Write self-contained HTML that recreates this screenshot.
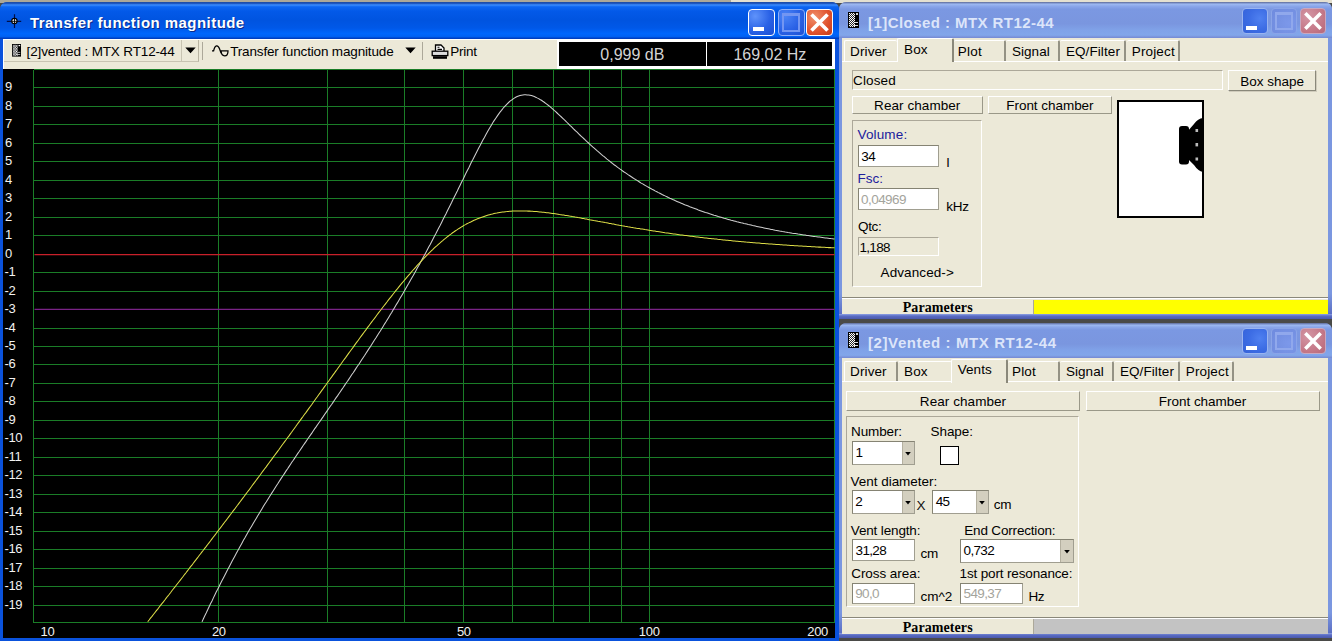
<!DOCTYPE html><html><head><meta charset="utf-8"><title>Transfer function magnitude</title>
<style>
html,body{margin:0;padding:0}
body{width:1332px;height:641px;overflow:hidden;position:relative;background:#4a4a48;font-family:'Liberation Sans', Arial, sans-serif}
div,span,svg{position:absolute;box-sizing:border-box}
.sunk{border:1px solid;border-color:#aca899 #fff #fff #aca899}
.inp{border:1px solid;border-color:#7f9db9;background:#fff}
.inp2{border:1px solid;border-color:#848274 #d8d4c4 #d8d4c4 #848274;background:#fff}
.btn{border:1px solid;border-color:#fff #aca899 #aca899 #fff;background:#ece9d8}
</style></head><body>
<div style="left:0px;top:0px;width:731px;height:3px;background:#aca899"></div>
<div style="left:731px;top:0px;width:601px;height:3px;background:#e4e0d0"></div>
<div style="left:0px;top:2px;width:839px;height:639px;background:#0a52dc;border-radius:8px 8px 0 0"></div>
<div style="left:0px;top:2px;width:839px;height:37px;background:linear-gradient(#1c4aa0 0,#1d56c0 4%,#3c8eff 8%,#0d66f2 13%,#0359e8 25%,#0054e0 50%,#0058e8 70%,#0066fc 85%,#0062f4 93%,#0044cc 97.5%,#0038b0 100%);border-radius:7px 7px 0 0"></div>
<svg style="left:6px;top:13px" width="17" height="17" viewBox="0 0 17 17"><path d="M8.5 1.2 V15 M0.8 8.3 H15.2" stroke="#00104a" stroke-width="1.2"/><circle cx="8.4" cy="8.1" r="2.7" fill="#fff" stroke="#000" stroke-width="1.1"/><path d="M8.5 5.5 V10.8 M5.8 8.3 H11" stroke="#000" stroke-width="0.9"/></svg>
<span style="left:30px;top:14px;font:bold 15px/17px 'Liberation Sans', Arial, sans-serif;color:#fff;white-space:pre;letter-spacing:0.45px;text-shadow:1px 1px 0 #0a2a8a;;">Transfer function magnitude</span>
<div style="left:748px;top:9px;width:27px;height:27px;border:1px solid #fff;border-radius:4px;background:radial-gradient(circle at 25% 25%,#5f93fb,#2a62e6 55%,#1c4fd2)">
<div style="left:4.0px;top:17.3px;width:11.3px;height:4.0px;background:#fff"></div>
</div>
<div style="left:777.5px;top:9px;width:27px;height:27px;border:1px solid #8fb0f8;border-radius:4px;background:radial-gradient(circle at 25% 25%,#4c84f6,#2a62e6 55%,#1c4fd2)">
<div style="left:3.5px;top:3.2px;width:18.4px;height:18.4px;border:2px solid #7396f2;border-top-width:3px"></div>
</div>
<div style="left:806px;top:9px;width:27px;height:27px;border:1px solid #fff;border-radius:4px;background:radial-gradient(circle at 30% 30%,#f0906c,#e0512c 60%,#c43a18)">
<svg style="left:0;top:0" width="25" height="25" viewBox="0 0 24 24"><path d="M4.3 4.3 L19.7 19.7 M19.7 4.3 L4.3 19.7" stroke="#fff" stroke-width="3.5" stroke-linecap="butt"/></svg>
</div>
<div style="left:3px;top:39px;width:832px;height:30px;background:#ece9d8;border-top:1px solid #fff;border-left:1px solid #fff"></div>
<div style="left:4px;top:40px;width:195px;height:22px;border-right:1px solid #b8b4a2;border-bottom:1px solid #c8c4b2"></div>
<div style="left:181px;top:40px;width:1px;height:21px;background:#c8c4b2"></div>
<svg style="left:12px;top:44.4px" width="9" height="12.6" viewBox="0 0 11 16" preserveAspectRatio="none"><defs><pattern id="ck1" width="2" height="2" patternUnits="userSpaceOnUse"><rect width="2" height="2" fill="#2a2a2a"/><rect width="1" height="1" fill="#fff"/><rect x="1" y="1" width="1" height="1" fill="#fff"/></pattern></defs><rect width="11" height="16" fill="#000"/><rect x="1" y="1" width="6" height="14" fill="url(#ck1)"/><rect x="8" y="1.2" width="2" height="1.6" fill="#fff"/><rect x="7" y="10" width="3" height="1" fill="#ddd"/><rect x="5" y="13" width="5" height="1" fill="#ddd"/></svg>
<span style="left:26.6px;top:44px;font:normal 13.5px/15px 'Liberation Sans', Arial, sans-serif;color:#000;white-space:pre;;letter-spacing:-0.145px;">[2]vented : MTX RT12-44</span>
<svg style="left:185px;top:47px" width="11" height="7" viewBox="0 0 11 7"><path d="M0.3 0.5 H10.7 L5.5 6.3 Z" fill="#000"/></svg>
<div style="left:202px;top:42px;width:1px;height:18px;background:#aca899"></div>
<svg style="left:211px;top:44px" width="19" height="14" viewBox="0 0 19 14"><path d="M1 6.8 H2.6 C4 0.5,7 0.5,8.6 5 C9.2 7,9.8 8.5,10.6 9.6" fill="none" stroke="#000" stroke-width="1.25"/><path d="M10 6.9 H17 C17 13.4,10.4 13.4,10 6.9 Z" fill="none" stroke="#000" stroke-width="1.25"/></svg>
<span style="left:230.2px;top:44px;font:normal 13.5px/15px 'Liberation Sans', Arial, sans-serif;color:#000;white-space:pre;;letter-spacing:-0.159px;">Transfer function magnitude</span>
<svg style="left:405px;top:47px" width="11" height="7" viewBox="0 0 11 7"><path d="M0.3 0.5 H10.7 L5.5 6.3 Z" fill="#000"/></svg>
<div style="left:422px;top:42px;width:1px;height:18px;background:#aca899"></div>
<svg style="left:431px;top:43.6px" width="18" height="16" viewBox="0 0 18 16"><path d="M4.5 7 V1 H10 L13 4 V7" fill="#fff" stroke="#000" stroke-width="1.3"/><path d="M6.5 3.2 H8.5 M6.5 5.4 H11" stroke="#000" stroke-width="1.1"/><rect x="1.2" y="7.2" width="15.6" height="4.4" fill="#ddd" stroke="#000" stroke-width="1.3"/><rect x="2" y="12.2" width="14" height="2.6" fill="#000"/></svg>
<span style="left:450.2px;top:44px;font:normal 13.5px/15px 'Liberation Sans', Arial, sans-serif;color:#000;white-space:pre;;letter-spacing:-0.233px;">Print</span>
<div style="left:557px;top:40px;width:278px;height:29px;background:#fff"></div>
<div style="left:559px;top:42px;width:146.7px;height:23.7px;background:#000"></div>
<div style="left:707.3px;top:42px;width:125.2px;height:23.7px;background:#000"></div>
<span style="left:559px;top:46px;font:normal 16px/17px 'Liberation Sans', Arial, sans-serif;color:#d4d4d4;white-space:pre;;width:146.7px;text-align:center;">0,999 dB</span>
<span style="left:707.3px;top:46px;font:normal 16px/17px 'Liberation Sans', Arial, sans-serif;color:#d4d4d4;white-space:pre;;width:125.2px;text-align:center;">169,02 Hz</span>
<div style="left:3px;top:68.6px;width:832px;height:569.6999999999999px;background:#000"></div>
<svg style="left:0;top:0" width="840" height="641" viewBox="0 0 840 641"><g shape-rendering="crispEdges" stroke-width="1" fill="none"><path d="M33.5 605.5 H834.5" stroke="#1a7d27"/><path d="M33.5 586.5 H834.5" stroke="#1a7d27"/><path d="M33.5 568.5 H834.5" stroke="#1a7d27"/><path d="M33.5 549.5 H834.5" stroke="#1a7d27"/><path d="M33.5 531.5 H834.5" stroke="#1a7d27"/><path d="M33.5 512.5 H834.5" stroke="#1a7d27"/><path d="M33.5 494.5 H834.5" stroke="#1a7d27"/><path d="M33.5 475.5 H834.5" stroke="#1a7d27"/><path d="M33.5 457.5 H834.5" stroke="#1a7d27"/><path d="M33.5 438.5 H834.5" stroke="#1a7d27"/><path d="M33.5 420.5 H834.5" stroke="#1a7d27"/><path d="M33.5 401.5 H834.5" stroke="#1a7d27"/><path d="M33.5 383.5 H834.5" stroke="#1a7d27"/><path d="M33.5 364.5 H834.5" stroke="#1a7d27"/><path d="M33.5 346.5 H834.5" stroke="#1a7d27"/><path d="M33.5 328.5 H834.5" stroke="#1a7d27"/><path d="M33.5 291.5 H834.5" stroke="#1a7d27"/><path d="M33.5 272.5 H834.5" stroke="#1a7d27"/><path d="M33.5 235.5 H834.5" stroke="#1a7d27"/><path d="M33.5 217.5 H834.5" stroke="#1a7d27"/><path d="M33.5 198.5 H834.5" stroke="#1a7d27"/><path d="M33.5 180.5 H834.5" stroke="#1a7d27"/><path d="M33.5 161.5 H834.5" stroke="#1a7d27"/><path d="M33.5 143.5 H834.5" stroke="#1a7d27"/><path d="M33.5 124.5 H834.5" stroke="#1a7d27"/><path d="M33.5 106.5 H834.5" stroke="#1a7d27"/><path d="M33.5 87.5 H834.5" stroke="#1a7d27"/><path d="M33.5 69.5 H834.5 M33.5 622.5 H834.5" stroke="#1a7d27"/><path d="M33.5 69.5 V622.5" stroke="#1a7d27"/><path d="M218.5 69.5 V622.5" stroke="#1a7d27"/><path d="M327.5 69.5 V622.5" stroke="#1a7d27"/><path d="M404.5 69.5 V622.5" stroke="#1a7d27"/><path d="M463.5 69.5 V622.5" stroke="#1a7d27"/><path d="M512.5 69.5 V622.5" stroke="#1a7d27"/><path d="M553.5 69.5 V622.5" stroke="#1a7d27"/><path d="M589.5 69.5 V622.5" stroke="#1a7d27"/><path d="M621.5 69.5 V622.5" stroke="#1a7d27"/><path d="M649.5 69.5 V622.5" stroke="#1a7d27"/><path d="M834.5 69.5 V622.5" stroke="#1a7d27"/></g><path d="M34.5 254.6 H834.5" stroke="#c8202a" stroke-width="1.4"/><path d="M34.5 309.4 H834.5" stroke="#7a2386" stroke-width="1.3"/><polyline points="202.0,621.9 203.4,618.8 204.8,615.8 206.3,612.8 207.7,609.8 209.1,606.8 210.5,603.8 212.0,600.9 213.4,597.9 214.8,595.0 216.2,592.1 217.7,589.3 219.1,586.4 220.5,583.6 221.9,580.7 223.4,577.9 224.8,575.2 226.2,572.4 227.7,569.6 229.1,566.9 230.5,564.2 231.9,561.5 233.4,558.8 234.8,556.2 236.2,553.6 237.6,550.9 239.1,548.3 240.5,545.8 241.9,543.2 243.3,540.6 244.8,538.1 246.2,535.6 247.6,533.1 249.0,530.6 250.5,528.1 251.9,525.7 253.3,523.3 254.8,520.8 256.2,518.4 257.6,516.0 259.0,513.7 260.5,511.3 261.9,509.0 263.3,506.6 264.7,504.3 266.2,502.0 267.6,499.7 269.0,497.4 270.4,495.2 271.9,492.9 273.3,490.7 274.7,488.4 276.1,486.2 277.6,484.0 279.0,481.8 280.4,479.6 281.8,477.4 283.3,475.2 284.7,473.1 286.1,470.9 287.6,468.8 289.0,466.6 290.4,464.5 291.8,462.3 293.3,460.2 294.7,458.1 296.1,456.0 297.5,453.9 299.0,451.8 300.4,449.7 301.8,447.6 303.2,445.5 304.7,443.4 306.1,441.4 307.5,439.3 308.9,437.2 310.4,435.1 311.8,433.1 313.2,431.0 314.6,428.9 316.1,426.9 317.5,424.8 318.9,422.7 320.4,420.7 321.8,418.6 323.2,416.6 324.6,414.5 326.1,412.4 327.5,410.4 328.9,408.3 330.3,406.2 331.8,404.2 333.2,402.1 334.6,400.0 336.0,397.9 337.5,395.9 338.9,393.8 340.3,391.7 341.7,389.6 343.2,387.5 344.6,385.4 346.0,383.3 347.5,381.2 348.9,379.1 350.3,377.0 351.7,374.8 353.2,372.7 354.6,370.6 356.0,368.4 357.4,366.3 358.9,364.2 360.3,362.0 361.7,359.8 363.1,357.7 364.6,355.5 366.0,353.3 367.4,351.1 368.8,348.9 370.3,346.7 371.7,344.5 373.1,342.2 374.5,340.0 376.0,337.8 377.4,335.5 378.8,333.3 380.3,331.0 381.7,328.7 383.1,326.4 384.5,324.1 386.0,321.8 387.4,319.5 388.8,317.2 390.2,314.8 391.7,312.5 393.1,310.1 394.5,307.7 395.9,305.3 397.4,302.9 398.8,300.5 400.2,298.1 401.6,295.7 403.1,293.2 404.5,290.8 405.9,288.3 407.3,285.8 408.8,283.3 410.2,280.8 411.6,278.3 413.1,275.8 414.5,273.2 415.9,270.7 417.3,268.1 418.8,265.5 420.2,262.9 421.6,260.3 423.0,257.7 424.5,255.0 425.9,252.4 427.3,249.7 428.7,247.0 430.2,244.4 431.6,241.7 433.0,238.9 434.4,236.2 435.9,233.5 437.3,230.7 438.7,227.9 440.2,225.2 441.6,222.4 443.0,219.6 444.4,216.7 445.9,213.9 447.3,211.1 448.7,208.2 450.1,205.4 451.6,202.5 453.0,199.6 454.4,196.8 455.8,193.9 457.3,191.0 458.7,188.1 460.1,185.2 461.5,182.3 463.0,179.4 464.4,176.5 465.8,173.6 467.2,170.8 468.7,167.9 470.1,165.0 471.5,162.1 473.0,159.3 474.4,156.5 475.8,153.7 477.2,150.9 478.7,148.1 480.1,145.4 481.5,142.7 482.9,140.0 484.4,137.4 485.8,134.8 487.2,132.3 488.6,129.8 490.1,127.3 491.5,124.9 492.9,122.6 494.3,120.4 495.8,118.2 497.2,116.1 498.6,114.1 500.0,112.1 501.5,110.3 502.9,108.5 504.3,106.9 505.8,105.3 507.2,103.8 508.6,102.5 510.0,101.2 511.5,100.1 512.9,99.1 514.3,98.1 515.7,97.3 517.2,96.6 518.6,96.1 520.0,95.6 521.4,95.2 522.9,95.0 524.3,94.8 525.7,94.8 527.1,94.9 528.6,95.0 530.0,95.3 531.4,95.6 532.9,96.1 534.3,96.6 535.7,97.2 537.1,97.9 538.6,98.6 540.0,99.5 541.4,100.3 542.8,101.3 544.3,102.3 545.7,103.3 547.1,104.4 548.5,105.5 550.0,106.7 551.4,107.9 552.8,109.1 554.2,110.4 555.7,111.7 557.1,113.0 558.5,114.3 559.9,115.6 561.4,117.0 562.8,118.3 564.2,119.7 565.7,121.1 567.1,122.5 568.5,123.9 569.9,125.3 571.4,126.7 572.8,128.1 574.2,129.5 575.6,130.8 577.1,132.2 578.5,133.6 579.9,135.0 581.3,136.3 582.8,137.7 584.2,139.0 585.6,140.4 587.0,141.7 588.5,143.0 589.9,144.3 591.3,145.6 592.7,146.9 594.2,148.2 595.6,149.4 597.0,150.7 598.5,151.9 599.9,153.1 601.3,154.4 602.7,155.6 604.2,156.7 605.6,157.9 607.0,159.1 608.4,160.2 609.9,161.3 611.3,162.5 612.7,163.6 614.1,164.7 615.6,165.7 617.0,166.8 618.4,167.9 619.8,168.9 621.3,169.9 622.7,171.0 624.1,172.0 625.6,172.9 627.0,173.9 628.4,174.9 629.8,175.8 631.3,176.8 632.7,177.7 634.1,178.6 635.5,179.5 637.0,180.4 638.4,181.3 639.8,182.2 641.2,183.1 642.7,183.9 644.1,184.8 645.5,185.6 646.9,186.4 648.4,187.2 649.8,188.0 651.2,188.8 652.6,189.6 654.1,190.3 655.5,191.1 656.9,191.8 658.4,192.6 659.8,193.3 661.2,194.0 662.6,194.7 664.1,195.4 665.5,196.1 666.9,196.8 668.3,197.5 669.8,198.2 671.2,198.8 672.6,199.5 674.0,200.1 675.5,200.8 676.9,201.4 678.3,202.0 679.7,202.6 681.2,203.2 682.6,203.8 684.0,204.4 685.4,205.0 686.9,205.5 688.3,206.1 689.7,206.7 691.2,207.2 692.6,207.8 694.0,208.3 695.4,208.8 696.9,209.3 698.3,209.9 699.7,210.4 701.1,210.9 702.6,211.4 704.0,211.9 705.4,212.4 706.8,212.8 708.3,213.3 709.7,213.8 711.1,214.2 712.5,214.7 714.0,215.2 715.4,215.6 716.8,216.0 718.3,216.5 719.7,216.9 721.1,217.3 722.5,217.7 724.0,218.2 725.4,218.6 726.8,219.0 728.2,219.4 729.7,219.8 731.1,220.2 732.5,220.5 733.9,220.9 735.4,221.3 736.8,221.7 738.2,222.0 739.6,222.4 741.1,222.8 742.5,223.1 743.9,223.5 745.3,223.8 746.8,224.1 748.2,224.5 749.6,224.8 751.1,225.1 752.5,225.5 753.9,225.8 755.3,226.1 756.8,226.4 758.2,226.7 759.6,227.0 761.0,227.3 762.5,227.6 763.9,227.9 765.3,228.2 766.7,228.5 768.2,228.8 769.6,229.1 771.0,229.4 772.4,229.6 773.9,229.9 775.3,230.2 776.7,230.4 778.1,230.7 779.6,231.0 781.0,231.2 782.4,231.5 783.9,231.7 785.3,232.0 786.7,232.2 788.1,232.5 789.6,232.7 791.0,232.9 792.4,233.2 793.8,233.4 795.3,233.6 796.7,233.8 798.1,234.1 799.5,234.3 801.0,234.5 802.4,234.7 803.8,234.9 805.2,235.1 806.7,235.4 808.1,235.6 809.5,235.8 811.0,236.0 812.4,236.2 813.8,236.4 815.2,236.6 816.7,236.7 818.1,236.9 819.5,237.1 820.9,237.3 822.4,237.5 823.8,237.7 825.2,237.9 826.6,238.0 828.1,238.2 829.5,238.4 830.9,238.6 832.3,238.7 833.8,238.9 834.5,239.1" fill="none" stroke="#cfcfcf" stroke-width="1.05"/><polyline points="147.7,621.8 149.1,620.0 150.5,618.1 152.0,616.3 153.4,614.5 154.8,612.7 156.2,610.9 157.7,609.1 159.1,607.2 160.5,605.4 161.9,603.6 163.4,601.8 164.8,600.0 166.2,598.1 167.6,596.3 169.1,594.5 170.5,592.7 171.9,590.8 173.3,589.0 174.8,587.2 176.2,585.3 177.6,583.5 179.0,581.7 180.5,579.8 181.9,578.0 183.3,576.2 184.7,574.3 186.2,572.5 187.6,570.6 189.0,568.8 190.4,566.9 191.9,565.1 193.3,563.3 194.7,561.4 196.1,559.6 197.6,557.7 199.0,555.8 200.4,554.0 201.8,552.1 203.3,550.3 204.7,548.4 206.1,546.6 207.5,544.7 209.0,542.8 210.4,541.0 211.8,539.1 213.2,537.2 214.7,535.4 216.1,533.5 217.5,531.6 218.9,529.8 220.4,527.9 221.8,526.0 223.2,524.1 224.6,522.3 226.1,520.4 227.5,518.5 228.9,516.6 230.3,514.7 231.8,512.8 233.2,510.9 234.6,509.1 236.0,507.2 237.5,505.3 238.9,503.4 240.3,501.5 241.7,499.6 243.2,497.7 244.6,495.8 246.0,493.9 247.4,492.0 248.9,490.1 250.3,488.2 251.7,486.3 253.1,484.3 254.6,482.4 256.0,480.5 257.4,478.6 258.8,476.7 260.3,474.8 261.7,472.8 263.1,470.9 264.5,469.0 266.0,467.1 267.4,465.1 268.8,463.2 270.2,461.3 271.7,459.4 273.1,457.4 274.5,455.5 275.9,453.6 277.4,451.6 278.8,449.7 280.2,447.7 281.6,445.8 283.1,443.8 284.5,441.9 285.9,440.0 287.3,438.0 288.8,436.1 290.2,434.1 291.6,432.2 293.0,430.2 294.5,428.2 295.9,426.3 297.3,424.3 298.7,422.4 300.2,420.4 301.6,418.4 303.0,416.5 304.4,414.5 305.9,412.6 307.3,410.6 308.7,408.6 310.1,406.7 311.6,404.7 313.0,402.7 314.4,400.7 315.8,398.8 317.3,396.8 318.7,394.8 320.1,392.9 321.5,390.9 323.0,388.9 324.4,386.9 325.8,385.0 327.2,383.0 328.7,381.0 330.1,379.0 331.5,377.1 332.9,375.1 334.4,373.1 335.8,371.1 337.2,369.2 338.6,367.2 340.1,365.2 341.5,363.3 342.9,361.3 344.3,359.3 345.8,357.4 347.2,355.4 348.6,353.4 350.0,351.5 351.5,349.5 352.9,347.6 354.3,345.6 355.7,343.6 357.2,341.7 358.6,339.7 360.0,337.8 361.4,335.9 362.9,333.9 364.3,332.0 365.7,330.1 367.1,328.1 368.6,326.2 370.0,324.3 371.4,322.4 372.8,320.5 374.3,318.6 375.7,316.7 377.1,314.8 378.5,312.9 380.0,311.0 381.4,309.2 382.8,307.3 384.2,305.5 385.7,303.6 387.1,301.8 388.5,299.9 389.9,298.1 391.4,296.3 392.8,294.5 394.2,292.7 395.6,290.9 397.1,289.2 398.5,287.4 399.9,285.6 401.3,283.9 402.8,282.2 404.2,280.5 405.6,278.8 407.0,277.1 408.5,275.4 409.9,273.8 411.3,272.1 412.7,270.5 414.2,268.9 415.6,267.3 417.0,265.7 418.4,264.2 419.9,262.6 421.3,261.1 422.7,259.6 424.1,258.1 425.6,256.6 427.0,255.2 428.4,253.7 429.8,252.3 431.3,250.9 432.7,249.6 434.1,248.2 435.5,246.9 437.0,245.6 438.4,244.3 439.8,243.1 441.2,241.8 442.7,240.6 444.1,239.4 445.5,238.3 446.9,237.1 448.4,236.0 449.8,234.9 451.2,233.9 452.6,232.8 454.1,231.8 455.5,230.8 456.9,229.9 458.3,228.9 459.8,228.0 461.2,227.1 462.6,226.3 464.0,225.4 465.5,224.6 466.9,223.8 468.3,223.1 469.7,222.4 471.2,221.7 472.6,221.0 474.0,220.3 475.4,219.7 476.9,219.1 478.3,218.5 479.7,217.9 481.1,217.4 482.6,216.9 484.0,216.4 485.4,215.9 486.8,215.5 488.3,215.1 489.7,214.7 491.1,214.3 492.5,214.0 494.0,213.6 495.4,213.3 496.8,213.1 498.2,212.8 499.7,212.5 501.1,212.3 502.5,212.1 503.9,211.9 505.4,211.7 506.8,211.6 508.2,211.4 509.6,211.3 511.1,211.2 512.5,211.1 513.9,211.0 515.3,211.0 516.8,210.9 518.2,210.9 519.6,210.9 521.0,210.9 522.5,210.9 523.9,210.9 525.3,211.0 526.7,211.0 528.2,211.1 529.6,211.1 531.0,211.2 532.4,211.3 533.9,211.4 535.3,211.5 536.7,211.6 538.1,211.7 539.6,211.9 541.0,212.0 542.4,212.2 543.8,212.3 545.3,212.5 546.7,212.7 548.1,212.8 549.5,213.0 551.0,213.2 552.4,213.4 553.8,213.6 555.2,213.8 556.7,214.0 558.1,214.2 559.5,214.5 560.9,214.7 562.4,214.9 563.8,215.1 565.2,215.4 566.6,215.6 568.1,215.8 569.5,216.1 570.9,216.3 572.3,216.6 573.8,216.8 575.2,217.1 576.6,217.3 578.0,217.6 579.5,217.8 580.9,218.1 582.3,218.4 583.7,218.6 585.2,218.9 586.6,219.1 588.0,219.4 589.4,219.7 590.9,219.9 592.3,220.2 593.7,220.5 595.1,220.7 596.6,221.0 598.0,221.3 599.4,221.5 600.8,221.8 602.3,222.0 603.7,222.3 605.1,222.6 606.5,222.8 608.0,223.1 609.4,223.4 610.8,223.6 612.2,223.9 613.7,224.1 615.1,224.4 616.5,224.7 617.9,224.9 619.4,225.2 620.8,225.4 622.2,225.7 623.6,225.9 625.1,226.2 626.5,226.4 627.9,226.7 629.3,226.9 630.8,227.2 632.2,227.4 633.6,227.7 635.0,227.9 636.5,228.2 637.9,228.4 639.3,228.6 640.7,228.9 642.2,229.1 643.6,229.3 645.0,229.6 646.4,229.8 647.9,230.0 649.3,230.3 650.7,230.5 652.1,230.7 653.6,230.9 655.0,231.1 656.4,231.4 657.8,231.6 659.3,231.8 660.7,232.0 662.1,232.2 663.5,232.4 665.0,232.7 666.4,232.9 667.8,233.1 669.2,233.3 670.7,233.5 672.1,233.7 673.5,233.9 674.9,234.1 676.4,234.3 677.8,234.5 679.2,234.7 680.6,234.9 682.1,235.0 683.5,235.2 684.9,235.4 686.3,235.6 687.8,235.8 689.2,236.0 690.6,236.2 692.0,236.3 693.5,236.5 694.9,236.7 696.3,236.9 697.7,237.0 699.2,237.2 700.6,237.4 702.0,237.5 703.4,237.7 704.9,237.9 706.3,238.0 707.7,238.2 709.1,238.4 710.6,238.5 712.0,238.7 713.4,238.8 714.8,239.0 716.3,239.1 717.7,239.3 719.1,239.4 720.5,239.6 722.0,239.7 723.4,239.9 724.8,240.0 726.2,240.2 727.7,240.3 729.1,240.5 730.5,240.6 731.9,240.7 733.4,240.9 734.8,241.0 736.2,241.2 737.6,241.3 739.1,241.4 740.5,241.5 741.9,241.7 743.3,241.8 744.8,241.9 746.2,242.1 747.6,242.2 749.0,242.3 750.5,242.4 751.9,242.5 753.3,242.7 754.7,242.8 756.2,242.9 757.6,243.0 759.0,243.1 760.4,243.2 761.9,243.4 763.3,243.5 764.7,243.6 766.1,243.7 767.6,243.8 769.0,243.9 770.4,244.0 771.8,244.1 773.3,244.2 774.7,244.3 776.1,244.4 777.5,244.5 779.0,244.6 780.4,244.7 781.8,244.8 783.2,244.9 784.7,245.0 786.1,245.1 787.5,245.2 788.9,245.3 790.4,245.4 791.8,245.5 793.2,245.6 794.6,245.7 796.1,245.8 797.5,245.8 798.9,245.9 800.3,246.0 801.8,246.1 803.2,246.2 804.6,246.3 806.0,246.3 807.5,246.4 808.9,246.5 810.3,246.6 811.7,246.7 813.2,246.7 814.6,246.8 816.0,246.9 817.4,247.0 818.9,247.1 820.3,247.1 821.7,247.2 823.1,247.3 824.6,247.3 826.0,247.4 827.4,247.5 828.8,247.6 830.3,247.6 831.7,247.7 833.1,247.8 834.5,247.8" fill="none" stroke="#dede48" stroke-width="1.05"/></svg>
<span style="left:4.4px;top:597px;font:normal 13px/15px 'Liberation Sans', Arial, sans-serif;color:#f2f2f2;white-space:pre;;letter-spacing:-0.300px;">-19</span>
<span style="left:4.4px;top:578px;font:normal 13px/15px 'Liberation Sans', Arial, sans-serif;color:#f2f2f2;white-space:pre;;letter-spacing:-0.300px;">-18</span>
<span style="left:4.4px;top:560px;font:normal 13px/15px 'Liberation Sans', Arial, sans-serif;color:#f2f2f2;white-space:pre;;letter-spacing:-0.300px;">-17</span>
<span style="left:4.4px;top:541px;font:normal 13px/15px 'Liberation Sans', Arial, sans-serif;color:#f2f2f2;white-space:pre;;letter-spacing:-0.300px;">-16</span>
<span style="left:4.4px;top:523px;font:normal 13px/15px 'Liberation Sans', Arial, sans-serif;color:#f2f2f2;white-space:pre;;letter-spacing:-0.300px;">-15</span>
<span style="left:4.4px;top:504px;font:normal 13px/15px 'Liberation Sans', Arial, sans-serif;color:#f2f2f2;white-space:pre;;letter-spacing:-0.300px;">-14</span>
<span style="left:4.4px;top:486px;font:normal 13px/15px 'Liberation Sans', Arial, sans-serif;color:#f2f2f2;white-space:pre;;letter-spacing:-0.300px;">-13</span>
<span style="left:4.4px;top:467px;font:normal 13px/15px 'Liberation Sans', Arial, sans-serif;color:#f2f2f2;white-space:pre;;letter-spacing:-0.300px;">-12</span>
<span style="left:4.4px;top:449px;font:normal 13px/15px 'Liberation Sans', Arial, sans-serif;color:#f2f2f2;white-space:pre;;letter-spacing:-0.300px;">-11</span>
<span style="left:4.4px;top:430px;font:normal 13px/15px 'Liberation Sans', Arial, sans-serif;color:#f2f2f2;white-space:pre;;letter-spacing:-0.300px;">-10</span>
<span style="left:4.4px;top:412px;font:normal 13px/15px 'Liberation Sans', Arial, sans-serif;color:#f2f2f2;white-space:pre;;letter-spacing:-0.300px;">-9</span>
<span style="left:4.4px;top:393px;font:normal 13px/15px 'Liberation Sans', Arial, sans-serif;color:#f2f2f2;white-space:pre;;letter-spacing:-0.300px;">-8</span>
<span style="left:4.4px;top:375px;font:normal 13px/15px 'Liberation Sans', Arial, sans-serif;color:#f2f2f2;white-space:pre;;letter-spacing:-0.300px;">-7</span>
<span style="left:4.4px;top:356px;font:normal 13px/15px 'Liberation Sans', Arial, sans-serif;color:#f2f2f2;white-space:pre;;letter-spacing:-0.300px;">-6</span>
<span style="left:4.4px;top:338px;font:normal 13px/15px 'Liberation Sans', Arial, sans-serif;color:#f2f2f2;white-space:pre;;letter-spacing:-0.300px;">-5</span>
<span style="left:4.4px;top:320px;font:normal 13px/15px 'Liberation Sans', Arial, sans-serif;color:#f2f2f2;white-space:pre;;letter-spacing:-0.300px;">-4</span>
<span style="left:4.4px;top:301px;font:normal 13px/15px 'Liberation Sans', Arial, sans-serif;color:#f2f2f2;white-space:pre;;letter-spacing:-0.300px;">-3</span>
<span style="left:4.4px;top:283px;font:normal 13px/15px 'Liberation Sans', Arial, sans-serif;color:#f2f2f2;white-space:pre;;letter-spacing:-0.300px;">-2</span>
<span style="left:4.4px;top:264px;font:normal 13px/15px 'Liberation Sans', Arial, sans-serif;color:#f2f2f2;white-space:pre;;letter-spacing:-0.300px;">-1</span>
<span style="left:5.0px;top:246px;font:normal 13px/15px 'Liberation Sans', Arial, sans-serif;color:#f2f2f2;white-space:pre;;letter-spacing:-0.300px;">0</span>
<span style="left:5.0px;top:227px;font:normal 13px/15px 'Liberation Sans', Arial, sans-serif;color:#f2f2f2;white-space:pre;;letter-spacing:-0.300px;">1</span>
<span style="left:5.0px;top:209px;font:normal 13px/15px 'Liberation Sans', Arial, sans-serif;color:#f2f2f2;white-space:pre;;letter-spacing:-0.300px;">2</span>
<span style="left:5.0px;top:190px;font:normal 13px/15px 'Liberation Sans', Arial, sans-serif;color:#f2f2f2;white-space:pre;;letter-spacing:-0.300px;">3</span>
<span style="left:5.0px;top:172px;font:normal 13px/15px 'Liberation Sans', Arial, sans-serif;color:#f2f2f2;white-space:pre;;letter-spacing:-0.300px;">4</span>
<span style="left:5.0px;top:153px;font:normal 13px/15px 'Liberation Sans', Arial, sans-serif;color:#f2f2f2;white-space:pre;;letter-spacing:-0.300px;">5</span>
<span style="left:5.0px;top:135px;font:normal 13px/15px 'Liberation Sans', Arial, sans-serif;color:#f2f2f2;white-space:pre;;letter-spacing:-0.300px;">6</span>
<span style="left:5.0px;top:116px;font:normal 13px/15px 'Liberation Sans', Arial, sans-serif;color:#f2f2f2;white-space:pre;;letter-spacing:-0.300px;">7</span>
<span style="left:5.0px;top:98px;font:normal 13px/15px 'Liberation Sans', Arial, sans-serif;color:#f2f2f2;white-space:pre;;letter-spacing:-0.300px;">8</span>
<span style="left:5.0px;top:79px;font:normal 13px/15px 'Liberation Sans', Arial, sans-serif;color:#f2f2f2;white-space:pre;;letter-spacing:-0.300px;">9</span>
<span style="left:40.6px;top:624px;font:normal 13px/15px 'Liberation Sans', Arial, sans-serif;color:#f2f2f2;white-space:pre;;letter-spacing:-0.300px;">10</span>
<span style="left:188.84416833031324px;top:624px;font:normal 13px/15px 'Liberation Sans', Arial, sans-serif;color:#f2f2f2;white-space:pre;;letter-spacing:-0.300px;width:60px;text-align:center;">20</span>
<span style="left:433.85583166968684px;top:624px;font:normal 13px/15px 'Liberation Sans', Arial, sans-serif;color:#f2f2f2;white-space:pre;;letter-spacing:-0.300px;width:60px;text-align:center;">50</span>
<span style="left:619.2px;top:624px;font:normal 13px/15px 'Liberation Sans', Arial, sans-serif;color:#f2f2f2;white-space:pre;;letter-spacing:-0.300px;width:60px;text-align:center;">100</span>
<span style="left:780px;top:624px;font:normal 13px/15px 'Liberation Sans', Arial, sans-serif;color:#f2f2f2;white-space:pre;;letter-spacing:-0.300px;width:48px;text-align:right;">200</span>
<div style="left:839.4px;top:2px;width:492.6px;height:316.6px;background:linear-gradient(#7b97e0,#7b97e0 92%,#5364bc);border-radius:8px 8px 0 0"></div>
<div style="left:839.4px;top:313.6px;width:492.6px;height:5px;background:linear-gradient(#8fa2e6,#5a6cc4 40%,#4a58ac)"></div>
<div style="left:839.4px;top:2px;width:492.6px;height:36px;background:linear-gradient(#5a6690 0,#7f94cc 3%,#9ab6f0 7%,#8aa6ea 12%,#7b98e2 20%,#7a96df 60%,#80a2e8 78%,#82a6ea 92%,#7a90d8 98%,#7088d0 100%);border-radius:7px 7px 0 0"></div>
<div style="left:842.0px;top:38px;width:485.8px;height:275.8px;background:#ece9d8"></div>
<svg style="left:848px;top:12px" width="11" height="16" viewBox="0 0 11 16" preserveAspectRatio="none"><defs><pattern id="ck2" width="2" height="2" patternUnits="userSpaceOnUse"><rect width="2" height="2" fill="#2a2a2a"/><rect width="1" height="1" fill="#fff"/><rect x="1" y="1" width="1" height="1" fill="#fff"/></pattern></defs><rect width="11" height="16" fill="#000"/><rect x="1" y="1" width="6" height="14" fill="url(#ck2)"/><rect x="8" y="1.2" width="2" height="1.6" fill="#fff"/><rect x="7" y="10" width="3" height="1" fill="#ddd"/><rect x="5" y="13" width="5" height="1" fill="#ddd"/></svg>
<span style="left:868px;top:14px;font:bold 15px/17px 'Liberation Sans', Arial, sans-serif;color:#dce5fa;white-space:pre;;letter-spacing:0.440px;">[1]Closed : MTX RT12-44</span>
<div style="left:1241.5px;top:8.4px;width:26px;height:26px;border:1px solid #9ab4f0;border-radius:4px;background:radial-gradient(circle at 70% 40%,#4f80f0,#3c6ce4 50%,#3562d8)">
<div style="left:3.9px;top:16.6px;width:10.9px;height:3.9px;background:#fff"></div>
</div>
<div style="left:1270.6px;top:8.4px;width:26px;height:26px;border:1px solid #8aa4e8;border-radius:4px;background:radial-gradient(circle at 70% 60%,#7c98ea,#7490e2 60%,#6e8ade)">
<div style="left:3.4px;top:3.1px;width:17.7px;height:17.7px;border:2px solid #90a8ec;border-top-width:3px"></div>
</div>
<div style="left:1299.6px;top:8.4px;width:26px;height:26px;border:1px solid #c8a8c0;border-radius:4px;background:radial-gradient(circle at 30% 30%,#d496a4,#c27484 70%,#b4687c)">
<svg style="left:0;top:0" width="24" height="24" viewBox="0 0 24 24"><path d="M4.3 4.3 L19.7 19.7 M19.7 4.3 L4.3 19.7" stroke="#fff" stroke-width="3.5" stroke-linecap="butt"/></svg>
</div>
<div style="left:844.4px;top:40.4px;width:53.0px;height:20.5px;border-top:1px solid #fff;border-radius:2px 2px 0 0;border-left:1px solid #fff;"></div>
<span style="left:850.1px;top:44px;font:normal 13.5px/15px 'Liberation Sans', Arial, sans-serif;color:#000;white-space:pre;;letter-spacing:0.100px;">Driver</span>
<div style="left:896.9px;top:38.4px;width:56.80000000000007px;height:24.0px;background:#ece9d8;border-top:1px solid #fff;border-left:1px solid #fff;border-right:2px solid #8a887a;border-radius:2px 2px 0 0;z-index:2"></div>
<span style="left:904.0px;top:42px;font:normal 13.5px/15px 'Liberation Sans', Arial, sans-serif;color:#000;white-space:pre;z-index:3;letter-spacing:0.178px;">Box</span>
<div style="left:953.7px;top:40.4px;width:52.69999999999993px;height:20.5px;border-top:1px solid #fff;border-radius:2px 2px 0 0;border-right:2px solid #949284;"></div>
<span style="left:957.8px;top:44px;font:normal 13.5px/15px 'Liberation Sans', Arial, sans-serif;color:#000;white-space:pre;;letter-spacing:0.234px;">Plot</span>
<div style="left:1006.4px;top:40.4px;width:53.89999999999998px;height:20.5px;border-top:1px solid #fff;border-radius:2px 2px 0 0;border-right:2px solid #949284;"></div>
<span style="left:1011.9px;top:44px;font:normal 13.5px/15px 'Liberation Sans', Arial, sans-serif;color:#000;white-space:pre;;letter-spacing:0.061px;">Signal</span>
<div style="left:1060.3px;top:40.4px;width:66.20000000000005px;height:20.5px;border-top:1px solid #fff;border-radius:2px 2px 0 0;border-right:2px solid #949284;"></div>
<span style="left:1065.9px;top:44px;font:normal 13.5px/15px 'Liberation Sans', Arial, sans-serif;color:#000;white-space:pre;;letter-spacing:0.093px;">EQ/Filter</span>
<div style="left:1126.5px;top:40.4px;width:53.700000000000045px;height:20.5px;border-top:1px solid #fff;border-radius:2px 2px 0 0;border-right:2px solid #949284;"></div>
<span style="left:1131.8px;top:44px;font:normal 13.5px/15px 'Liberation Sans', Arial, sans-serif;color:#000;white-space:pre;;letter-spacing:0.138px;">Project</span>
<div style="left:842px;top:61px;width:486px;height:1px;background:#fff;z-index:1"></div>
<div style="left:852px;top:70.4px;width:371px;height:19.8px;border:1px solid;border-color:#aca899 #fff #fff #aca899"></div>
<span style="left:853px;top:73px;font:normal 13.5px/15px 'Liberation Sans', Arial, sans-serif;color:#000;white-space:pre;;letter-spacing:0.128px;">Closed</span>
<div style="left:1228.4px;top:70.4px;width:87.4px;height:20.6px;border:1px solid;border-color:#fff #8a887a #8a887a #fff;box-shadow:1px 1px 0 #d0ccbc"></div>
<span style="left:1228.4px;top:74px;font:normal 13.5px/15px 'Liberation Sans', Arial, sans-serif;color:#000;white-space:pre;;letter-spacing:0.011px;width:87.4px;text-align:center;">Box shape</span>
<div style="left:852px;top:96.3px;width:130.5px;height:18px;border:1px solid;border-color:#fff #9a9888 #9a9888 #fff"></div>
<span style="left:852px;top:98px;font:normal 13.5px/15px 'Liberation Sans', Arial, sans-serif;color:#000;white-space:pre;;letter-spacing:0.063px;width:130.5px;text-align:center;">Rear chamber</span>
<div style="left:988px;top:96.3px;width:123.8px;height:18px;border:1px solid;border-color:#fff #9a9888 #9a9888 #fff"></div>
<span style="left:988px;top:98px;font:normal 13.5px/15px 'Liberation Sans', Arial, sans-serif;color:#000;white-space:pre;;letter-spacing:-0.038px;width:123.8px;text-align:center;">Front chamber</span>
<div style="left:1116.8px;top:99.8px;width:87.6px;height:118px;background:#fff;border:2px solid #000"></div>
<svg style="left:1170px;top:110px" width="34" height="70" viewBox="1170 110 34 70"><rect x="1179" y="126" width="10" height="38.5" rx="3" fill="#000"/><path d="M1187 132 L1194 124 Q1198 118.5 1203 118 V172 Q1198 171 1194 165 L1187 158 Z" fill="#000"/><rect x="1195.5" y="129" width="2.6" height="3" fill="#bbb"/><rect x="1195.5" y="143" width="2.6" height="3.4" fill="#bbb"/><rect x="1195.5" y="157.5" width="2.6" height="3" fill="#bbb"/></svg>
<div style="left:851.9px;top:120.3px;width:130.6px;height:167px;border:1px solid;border-color:#aca899 #fff #fff #aca899"></div>
<span style="left:857.5px;top:127px;font:normal 13.5px/15px 'Liberation Sans', Arial, sans-serif;color:#20209c;white-space:pre;;letter-spacing:0.146px;">Volume:</span>
<div style="left:858px;top:145.3px;width:80.8px;height:21.4px;background:#fff;border:1px solid;border-color:#858373 #a09e90 #a09e90 #858373"></div>
<span style="left:861.3px;top:149px;font:normal 13.5px/15px 'Liberation Sans', Arial, sans-serif;color:#000;white-space:pre;;letter-spacing:-0.566px;">34</span>
<span style="left:946.6px;top:155px;font:normal 13.5px/15px 'Liberation Sans', Arial, sans-serif;color:#000;white-space:pre;;">l</span>
<span style="left:857.5px;top:171px;font:normal 13.5px/15px 'Liberation Sans', Arial, sans-serif;color:#20209c;white-space:pre;;letter-spacing:0.000px;">Fsc:</span>
<div style="left:858px;top:188.3px;width:80.8px;height:21.3px;background:#fff;border:1px solid;border-color:#858373 #a09e90 #a09e90 #858373"></div>
<span style="left:861.1px;top:192px;font:normal 13.5px/15px 'Liberation Sans', Arial, sans-serif;color:#a4a49c;white-space:pre;;letter-spacing:-0.573px;">0,04969</span>
<span style="left:946.3px;top:199px;font:normal 13.5px/15px 'Liberation Sans', Arial, sans-serif;color:#000;white-space:pre;;letter-spacing:-0.250px;">kHz</span>
<span style="left:858px;top:219px;font:normal 13.5px/15px 'Liberation Sans', Arial, sans-serif;color:#000;white-space:pre;;letter-spacing:-0.316px;">Qtc:</span>
<div style="left:858px;top:237.2px;width:80.5px;height:19px;border:1px solid;border-color:#aca899 #fff #fff #aca899"></div>
<span style="left:859.6px;top:240px;font:normal 13.5px/15px 'Liberation Sans', Arial, sans-serif;color:#000;white-space:pre;;letter-spacing:-0.739px;">1,188</span>
<span style="left:880.6px;top:265px;font:normal 13.5px/15px 'Liberation Sans', Arial, sans-serif;color:#000;white-space:pre;;letter-spacing:0.086px;">Advanced-&gt;</span>
<div style="left:842px;top:296.8px;width:486px;height:1.2px;background:#8a887a"></div>
<div style="left:842px;top:298px;width:486px;height:1px;background:#fff"></div>
<div style="left:842px;top:299px;width:486px;height:14.8px;background:#ece9d8"></div>
<div style="left:1033.4px;top:299.6px;width:294.5999999999999px;height:14.2px;background:#ffff00;border-left:1px solid #aca899"></div>
<span style="left:902.7px;top:300px;font:bold 14px/15px 'Liberation Serif', serif;color:#000;white-space:pre;;letter-spacing:0.081px;">Parameters</span>
<div style="left:839.4px;top:323px;width:492.6px;height:315.2px;background:linear-gradient(#7b97e0,#7b97e0 92%,#5364bc);border-radius:8px 8px 0 0"></div>
<div style="left:839.4px;top:633.2px;width:492.6px;height:5px;background:linear-gradient(#8fa2e6,#5a6cc4 40%,#4a58ac)"></div>
<div style="left:839.4px;top:323px;width:492.6px;height:34.6px;background:linear-gradient(#5a6690 0,#7f94cc 3%,#9ab6f0 7%,#8aa6ea 12%,#7b98e2 20%,#7a96df 60%,#80a2e8 78%,#82a6ea 92%,#7a90d8 98%,#7088d0 100%);border-radius:7px 7px 0 0"></div>
<div style="left:842.0px;top:357.6px;width:485.8px;height:275.79999999999995px;background:#ece9d8"></div>
<svg style="left:848px;top:332.2px" width="11" height="16" viewBox="0 0 11 16" preserveAspectRatio="none"><defs><pattern id="ck3" width="2" height="2" patternUnits="userSpaceOnUse"><rect width="2" height="2" fill="#2a2a2a"/><rect width="1" height="1" fill="#fff"/><rect x="1" y="1" width="1" height="1" fill="#fff"/></pattern></defs><rect width="11" height="16" fill="#000"/><rect x="1" y="1" width="6" height="14" fill="url(#ck3)"/><rect x="8" y="1.2" width="2" height="1.6" fill="#fff"/><rect x="7" y="10" width="3" height="1" fill="#ddd"/><rect x="5" y="13" width="5" height="1" fill="#ddd"/></svg>
<span style="left:868px;top:334px;font:bold 15px/17px 'Liberation Sans', Arial, sans-serif;color:#dce5fa;white-space:pre;;letter-spacing:0.594px;">[2]Vented : MTX RT12-44</span>
<div style="left:1241.5px;top:328.4px;width:26px;height:26px;border:1px solid #9ab4f0;border-radius:4px;background:radial-gradient(circle at 70% 40%,#4f80f0,#3c6ce4 50%,#3562d8)">
<div style="left:3.9px;top:16.6px;width:10.9px;height:3.9px;background:#fff"></div>
</div>
<div style="left:1270.6px;top:328.4px;width:26px;height:26px;border:1px solid #8aa4e8;border-radius:4px;background:radial-gradient(circle at 70% 60%,#7c98ea,#7490e2 60%,#6e8ade)">
<div style="left:3.4px;top:3.1px;width:17.7px;height:17.7px;border:2px solid #90a8ec;border-top-width:3px"></div>
</div>
<div style="left:1299.6px;top:328.4px;width:26px;height:26px;border:1px solid #c8a8c0;border-radius:4px;background:radial-gradient(circle at 30% 30%,#d496a4,#c27484 70%,#b4687c)">
<svg style="left:0;top:0" width="24" height="24" viewBox="0 0 24 24"><path d="M4.3 4.3 L19.7 19.7 M19.7 4.3 L4.3 19.7" stroke="#fff" stroke-width="3.5" stroke-linecap="butt"/></svg>
</div>
<div style="left:844.4px;top:360.7px;width:53.60000000000002px;height:20.5px;border-top:1px solid #fff;border-radius:2px 2px 0 0;border-left:1px solid #fff;border-right:2px solid #949284;"></div>
<span style="left:850.1px;top:364px;font:normal 13.5px/15px 'Liberation Sans', Arial, sans-serif;color:#000;white-space:pre;;letter-spacing:0.100px;">Driver</span>
<div style="left:898px;top:360.7px;width:53.60000000000002px;height:20.5px;border-top:1px solid #fff;border-radius:2px 2px 0 0;"></div>
<span style="left:904.0px;top:364px;font:normal 13.5px/15px 'Liberation Sans', Arial, sans-serif;color:#000;white-space:pre;;letter-spacing:0.178px;">Box</span>
<div style="left:951.1px;top:358.7px;width:56.89999999999998px;height:24.0px;background:#ece9d8;border-top:1px solid #fff;border-left:1px solid #fff;border-right:2px solid #8a887a;border-radius:2px 2px 0 0;z-index:2"></div>
<span style="left:957.8px;top:362px;font:normal 13.5px/15px 'Liberation Sans', Arial, sans-serif;color:#000;white-space:pre;z-index:3;letter-spacing:0.024px;">Vents</span>
<div style="left:1008px;top:360.7px;width:52.299999999999955px;height:20.5px;border-top:1px solid #fff;border-radius:2px 2px 0 0;border-right:2px solid #949284;"></div>
<span style="left:1011.9px;top:364px;font:normal 13.5px/15px 'Liberation Sans', Arial, sans-serif;color:#000;white-space:pre;;letter-spacing:0.234px;">Plot</span>
<div style="left:1060.3px;top:360.7px;width:54.0px;height:20.5px;border-top:1px solid #fff;border-radius:2px 2px 0 0;border-right:2px solid #949284;"></div>
<span style="left:1065.9px;top:364px;font:normal 13.5px/15px 'Liberation Sans', Arial, sans-serif;color:#000;white-space:pre;;letter-spacing:0.061px;">Signal</span>
<div style="left:1114.3px;top:360.7px;width:66.20000000000005px;height:20.5px;border-top:1px solid #fff;border-radius:2px 2px 0 0;border-right:2px solid #949284;"></div>
<span style="left:1119.9px;top:364px;font:normal 13.5px/15px 'Liberation Sans', Arial, sans-serif;color:#000;white-space:pre;;letter-spacing:0.093px;">EQ/Filter</span>
<div style="left:1180.5px;top:360.7px;width:53.700000000000045px;height:20.5px;border-top:1px solid #fff;border-radius:2px 2px 0 0;border-right:2px solid #949284;"></div>
<span style="left:1185.8px;top:364px;font:normal 13.5px/15px 'Liberation Sans', Arial, sans-serif;color:#000;white-space:pre;;letter-spacing:0.138px;">Project</span>
<div style="left:842px;top:381px;width:486px;height:1px;background:#fff;z-index:1"></div>
<div style="left:846.3px;top:391.4px;width:233.4px;height:19.4px;border:1px solid;border-color:#fff #9a9888 #9a9888 #fff"></div>
<span style="left:846.3px;top:394px;font:normal 13.5px/15px 'Liberation Sans', Arial, sans-serif;color:#000;white-space:pre;;letter-spacing:0.063px;width:233.4px;text-align:center;">Rear chamber</span>
<div style="left:1085.5px;top:391.4px;width:234px;height:19.4px;border:1px solid;border-color:#fff #9a9888 #9a9888 #fff"></div>
<span style="left:1085.5px;top:394px;font:normal 13.5px/15px 'Liberation Sans', Arial, sans-serif;color:#000;white-space:pre;;letter-spacing:-0.038px;width:234px;text-align:center;">Front chamber</span>
<div style="left:846.3px;top:416.3px;width:233px;height:191px;border:1px solid;border-color:#aca899 #fff #fff #aca899"></div>
<span style="left:851px;top:424px;font:normal 13.5px/15px 'Liberation Sans', Arial, sans-serif;color:#000;white-space:pre;;letter-spacing:-0.109px;">Number:</span>
<span style="left:930.5px;top:424px;font:normal 13.5px/15px 'Liberation Sans', Arial, sans-serif;color:#000;white-space:pre;;letter-spacing:-0.049px;">Shape:</span>
<div style="left:852px;top:441.4px;width:62.8px;height:23.4px;background:#fff;border:1px solid;border-color:#858373 #a09e90 #a09e90 #858373"></div>
<div style="left:901.6px;top:442.4px;width:12.199999999999932px;height:21.4px;background:#d3cfbf;border-left:1px solid #b4b0a0"></div>
<svg style="left:905.0px;top:451.8px" width="6" height="4" viewBox="0 0 6 4"><path d="M0.2 0 H5.8 L3 3.4 Z" fill="#000"/></svg>
<span style="left:855.6px;top:445px;font:normal 13.5px/15px 'Liberation Sans', Arial, sans-serif;color:#000;white-space:pre;;">1</span>
<div style="left:940px;top:446px;width:19.2px;height:19px;background:#fff;border:1.2px solid #000"></div>
<span style="left:850.6px;top:474px;font:normal 13.5px/15px 'Liberation Sans', Arial, sans-serif;color:#000;white-space:pre;;letter-spacing:-0.033px;">Vent diameter:</span>
<div style="left:852px;top:490.3px;width:62.8px;height:23.3px;background:#fff;border:1px solid;border-color:#858373 #a09e90 #a09e90 #858373"></div>
<div style="left:901.6px;top:491.3px;width:12.199999999999932px;height:21.3px;background:#d3cfbf;border-left:1px solid #b4b0a0"></div>
<svg style="left:905.0px;top:500.6px" width="6" height="4" viewBox="0 0 6 4"><path d="M0.2 0 H5.8 L3 3.4 Z" fill="#000"/></svg>
<span style="left:855.3px;top:494px;font:normal 13.5px/15px 'Liberation Sans', Arial, sans-serif;color:#000;white-space:pre;;">2</span>
<span style="left:916.4px;top:498px;font:normal 13.5px/15px 'Liberation Sans', Arial, sans-serif;color:#111;white-space:pre;;">X</span>
<div style="left:932.2px;top:490.3px;width:56.7px;height:23.3px;background:#fff;border:1px solid;border-color:#858373 #a09e90 #a09e90 #858373"></div>
<div style="left:975.7px;top:491.3px;width:12.200000000000045px;height:21.3px;background:#d3cfbf;border-left:1px solid #b4b0a0"></div>
<svg style="left:979.1px;top:500.6px" width="6" height="4" viewBox="0 0 6 4"><path d="M0.2 0 H5.8 L3 3.4 Z" fill="#000"/></svg>
<span style="left:935.8px;top:494px;font:normal 13.5px/15px 'Liberation Sans', Arial, sans-serif;color:#000;white-space:pre;;letter-spacing:-0.866px;">45</span>
<span style="left:993.8px;top:497px;font:normal 13.5px/15px 'Liberation Sans', Arial, sans-serif;color:#000;white-space:pre;;letter-spacing:-0.350px;">cm</span>
<span style="left:850.8px;top:523px;font:normal 13.5px/15px 'Liberation Sans', Arial, sans-serif;color:#000;white-space:pre;;letter-spacing:-0.151px;">Vent length:</span>
<span style="left:964.3px;top:523px;font:normal 13.5px/15px 'Liberation Sans', Arial, sans-serif;color:#000;white-space:pre;;letter-spacing:-0.180px;">End Correction:</span>
<div style="left:852.2px;top:539.4px;width:62.6px;height:21.4px;background:#fff;border:1px solid;border-color:#858373 #a09e90 #a09e90 #858373"></div>
<span style="left:855.6px;top:543px;font:normal 13.5px/15px 'Liberation Sans', Arial, sans-serif;color:#000;white-space:pre;;letter-spacing:-0.679px;">31,28</span>
<span style="left:920.6px;top:546px;font:normal 13.5px/15px 'Liberation Sans', Arial, sans-serif;color:#000;white-space:pre;;letter-spacing:-0.350px;">cm</span>
<div style="left:960.2px;top:539.4px;width:113.8px;height:23.3px;background:#fff;border:1px solid;border-color:#858373 #a09e90 #a09e90 #858373"></div>
<div style="left:1060.4px;top:540.4px;width:12.599999999999909px;height:21.3px;background:#d3cfbf;border-left:1px solid #b4b0a0"></div>
<svg style="left:1064.0px;top:549.8px" width="6" height="4" viewBox="0 0 6 4"><path d="M0.2 0 H5.8 L3 3.4 Z" fill="#000"/></svg>
<span style="left:963.6px;top:543px;font:normal 13.5px/15px 'Liberation Sans', Arial, sans-serif;color:#000;white-space:pre;;letter-spacing:-0.679px;">0,732</span>
<span style="left:851.2px;top:566px;font:normal 13.5px/15px 'Liberation Sans', Arial, sans-serif;color:#000;white-space:pre;;letter-spacing:-0.053px;">Cross area:</span>
<span style="left:959.6px;top:566px;font:normal 13.5px/15px 'Liberation Sans', Arial, sans-serif;color:#000;white-space:pre;;letter-spacing:-0.151px;">1st port resonance:</span>
<div style="left:852.2px;top:582.5px;width:62.6px;height:21.3px;background:#fff;border:1px solid;border-color:#858373 #a09e90 #a09e90 #858373"></div>
<span style="left:855.3px;top:586px;font:normal 13.5px/15px 'Liberation Sans', Arial, sans-serif;color:#a4a49c;white-space:pre;;letter-spacing:-0.695px;">90,0</span>
<span style="left:920.6px;top:589px;font:normal 13.5px/15px 'Liberation Sans', Arial, sans-serif;color:#000;white-space:pre;;letter-spacing:-0.061px;">cm^2</span>
<div style="left:960.2px;top:582.5px;width:62.6px;height:21.3px;background:#fff;border:1px solid;border-color:#858373 #a09e90 #a09e90 #858373"></div>
<span style="left:963.6px;top:586px;font:normal 13.5px/15px 'Liberation Sans', Arial, sans-serif;color:#a4a49c;white-space:pre;;letter-spacing:-0.633px;">549,37</span>
<span style="left:1028.4px;top:589px;font:normal 13.5px/15px 'Liberation Sans', Arial, sans-serif;color:#000;white-space:pre;;letter-spacing:-0.500px;">Hz</span>
<div style="left:842px;top:616.5999999999999px;width:486px;height:1.2px;background:#8a887a"></div>
<div style="left:842px;top:617.8px;width:486px;height:1px;background:#fff"></div>
<div style="left:842px;top:618.8px;width:486px;height:14.8px;background:#ece9d8"></div>
<div style="left:1033.4px;top:619.4px;width:294.5999999999999px;height:14.2px;background:#c3c3c3;border-left:1px solid #aca899"></div>
<span style="left:902.7px;top:620px;font:bold 14px/15px 'Liberation Serif', serif;color:#000;white-space:pre;;letter-spacing:0.081px;">Parameters</span>
</body></html>
